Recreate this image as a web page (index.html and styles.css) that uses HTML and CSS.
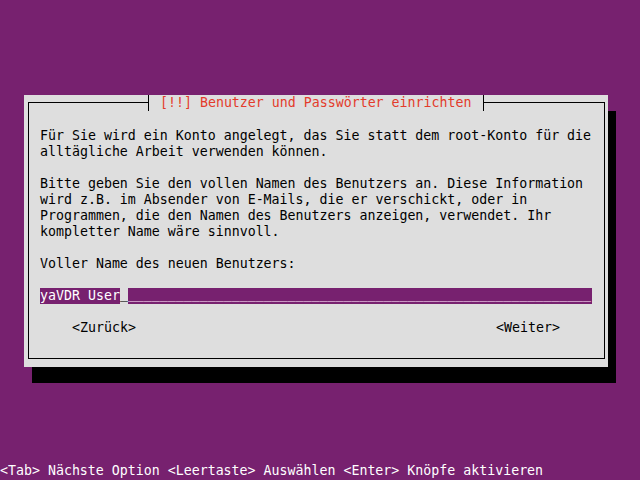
FILE: index.html
```html
<!DOCTYPE html>
<html lang="de">
<head>
<meta charset="utf-8">
<title>Benutzer und Passwörter einrichten</title>
<link rel="stylesheet" href="styles.css">
</head>
<body>
<div class="screen">
  <div class="dialog">
    <div class="title">&nbsp;[!!] Benutzer und Passwörter einrichten&nbsp;</div>
    <div class="frame">
      <p class="text">Für Sie wird ein Konto angelegt, das Sie statt dem root-Konto für die<br>alltägliche Arbeit verwenden können.</p>
      <p class="text">Bitte geben Sie den vollen Namen des Benutzers an. Diese Information<br>wird z.B. im Absender von E-Mails, die er verschickt, oder in<br>Programmen, die den Namen des Benutzers anzeigen, verwendet. Ihr<br>kompletter Name wäre sinnvoll.</p>
      <p class="text">Voller Name des neuen Benutzers:</p>
      <div class="field"><span class="value">yaVDR User</span><span class="cursor">_</span><span class="rest">__________________________________________________________</span></div>
      <div class="buttons"><span class="button">&lt;Zurück&gt;</span><span class="button">&lt;Weiter&gt;</span></div>
    </div>
  </div>
  <div class="status">&lt;Tab&gt; Nächste Option &lt;Leertaste&gt; Auswählen &lt;Enter&gt; Knöpfe aktivieren</div>
</div>
</body>
</html>
```
FILE: styles.css
```css
html, body {
  margin: 0;
  padding: 0;
  background: #77216f;
}
.screen {
  width: 640px;
  height: 480px;
  display: flex;
  flex-direction: column;
  font-family: "DejaVu Sans Mono", "Liberation Mono", monospace;
  font-size: 13.28px;
  line-height: 16px;
  white-space: nowrap;
}
.dialog {
  position: relative;
  box-sizing: border-box;
  margin: 95px 0 0 24px;
  width: 584px;
  height: 272px;
  padding: 7px 3px 8px 4px;
  background: #dedede;
  box-shadow: 8px 16px 0 #000;
  color: #000;
}
.title {
  position: absolute;
  top: 0;
  left: 124px;
  height: 16px;
  padding: 0 4px 0 3px;
  border-left: 1px solid #000;
  border-right: 1px solid #000;
  background: #dedede;
  color: #e33b2b;
}
.frame {
  box-sizing: border-box;
  height: 100%;
  border: 1px solid #000;
  padding: 25px 0 0 11px;
  display: flex;
  flex-direction: column;
  gap: 16px;
}
.text {
  margin: 0;
}
.field {
  display: flex;
  width: 552px;
  height: 16px;
}
.value {
  background: #77216f;
  color: #ffffff;
}
.cursor {
  line-height: 12px;
  color: #000;
}
.rest {
  flex: 1;
  line-height: 12px;
  background: #77216f;
  color: #f3d6ee;
}
.buttons {
  display: flex;
  justify-content: space-between;
  width: 552px;
  box-sizing: border-box;
  padding: 0 32px;
}
.button {
  color: #000;
}
.status {
  margin-top: auto;
  margin-bottom: 1px;
  height: 16px;
  color: #ffffff;
}
```
